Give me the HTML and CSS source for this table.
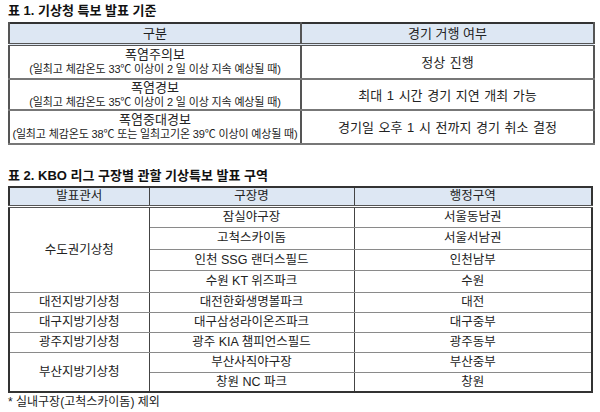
FILE: index.html
```html
<!DOCTYPE html>
<html lang="ko">
<head>
<meta charset="utf-8">
<link rel="stylesheet" href="styles.css">
</head>
<body>
<div class="page">
  <div class="title t1">표 1. 기상청 특보 발표 기준</div>
  <table class="tbl tbl1">
    <colgroup><col class="c1a"><col class="c1b"></colgroup>
    <tr class="head"><th>구분</th><th>경기 거행 여부</th></tr>
    <tr class="r34"><td><div class="main">폭염주의보</div><div class="sub">(일최고 체감온도 33℃ 이상이 2 일 이상 지속 예상될 때)</div></td><td class="big">정상 진행</td></tr>
    <tr class="r31"><td><div class="main">폭염경보</div><div class="sub">(일최고 체감온도 35℃ 이상이 2 일 이상 지속 예상될 때)</div></td><td class="big">최대 1 시간 경기 지연 개최 가능</td></tr>
    <tr class="r34"><td><div class="main">폭염중대경보</div><div class="sub">(일최고 체감온도 38℃ 또는 일최고기온 39℃ 이상이 예상될 때)</div></td><td class="big">경기일 오후 1 시 전까지 경기 취소 결정</td></tr>
  </table>
  <div class="title t2">표 2. KBO 리그 구장별 관할 기상특보 발표 구역</div>
  <table class="tbl tbl2">
    <colgroup><col class="c2a"><col class="c2b"><col class="c2c"></colgroup>
    <tr class="head2"><th>발표관서</th><th>구장명</th><th>행정구역</th></tr>
    <tr class="ra"><td rowspan="4">수도권기상청</td><td>잠실야구장</td><td>서울동남권</td></tr>
    <tr class="ra"><td>고척스카이돔</td><td>서울서남권</td></tr>
    <tr class="ra"><td>인천 SSG 랜더스필드</td><td>인천남부</td></tr>
    <tr class="ra"><td>수원 KT 위즈파크</td><td>수원</td></tr>
    <tr class="rb"><td>대전지방기상청</td><td>대전한화생명볼파크</td><td>대전</td></tr>
    <tr class="rb"><td>대구지방기상청</td><td>대구삼성라이온즈파크</td><td>대구중부</td></tr>
    <tr class="rb"><td>광주지방기상청</td><td>광주 KIA 챔피언스필드</td><td>광주동부</td></tr>
    <tr class="rb"><td rowspan="2">부산지방기상청</td><td>부산사직야구장</td><td>부산중부</td></tr>
    <tr class="rb"><td>창원 NC 파크</td><td>창원</td></tr>
  </table>
  <div class="note">* 실내구장(고척스카이돔) 제외</div>
</div>
</body>
</html>
```
FILE: styles.css
```css
html, body {
  margin: 0;
  padding: 0;
  background: #ffffff;
}
body {
  font-family: "Liberation Sans", "Noto Sans CJK KR", sans-serif;
  color: #222222;
}
.page {
  width: 600px;
  padding: 0 8px;
  box-sizing: border-box;
}
.title {
  font-weight: bold;
  font-size: 13px;
  color: #111111;
}
.t1 {
  height: 22px;
  line-height: 22px;
}
.t2 {
  padding-top: 20px;
  height: 21px;
  line-height: 21px;
}
.tbl {
  border-collapse: collapse;
  border: 2px solid #333333;
  table-layout: fixed;
}
.tbl th, .tbl td {
  padding: 0;
  text-align: center;
  vertical-align: middle;
  font-weight: normal;
  border: 1px solid #8a8a8a;
  white-space: nowrap;
}
.tbl1 {
  width: 585px;
}
.c1a { width: 292px; }
.c1b { width: 293px; }
.tbl1 th, .tbl1 td {
  border-left: 2px solid #555555;
  border-right: 2px solid #555555;
}
.tbl1 th {
  background: #dde7f3;
  font-size: 13px;
  height: 19px;
  line-height: 19px;
  border-bottom: 3px double #555555;
}
.tbl1 td {
  border-bottom: 2px solid #777777;
}
.r34 { height: 34px; }
.r31 { height: 31px; }
.main {
  font-size: 13px;
  line-height: 15px;
}
.sub {
  font-size: 11px;
  line-height: 14px;
  letter-spacing: -0.15px;
}
.big {
  font-size: 13px;
  word-spacing: 1px;
}
.tbl2 {
  width: 583px;
}
.c2a { width: 140px; }
.c2b { width: 205px; }
.c2c { width: 238px; }
.tbl2 th {
  background: #dde7f3;
  font-size: 12.5px;
  height: 17px;
  line-height: 17px;
  border-bottom: 3px double #555555;
}
.tbl2 td {
  font-size: 12.5px;
  line-height: 16px;
}
.tbl2 td, .tbl2 th {
  border-left: 1px solid #444444;
  border-right: 1px solid #444444;
}
.ra { height: 21.5px; }
.rb { height: 20px; }
.note {
  font-size: 12px;
  line-height: 16px;
  padding-top: 1px;
  color: #222222;
}
```
